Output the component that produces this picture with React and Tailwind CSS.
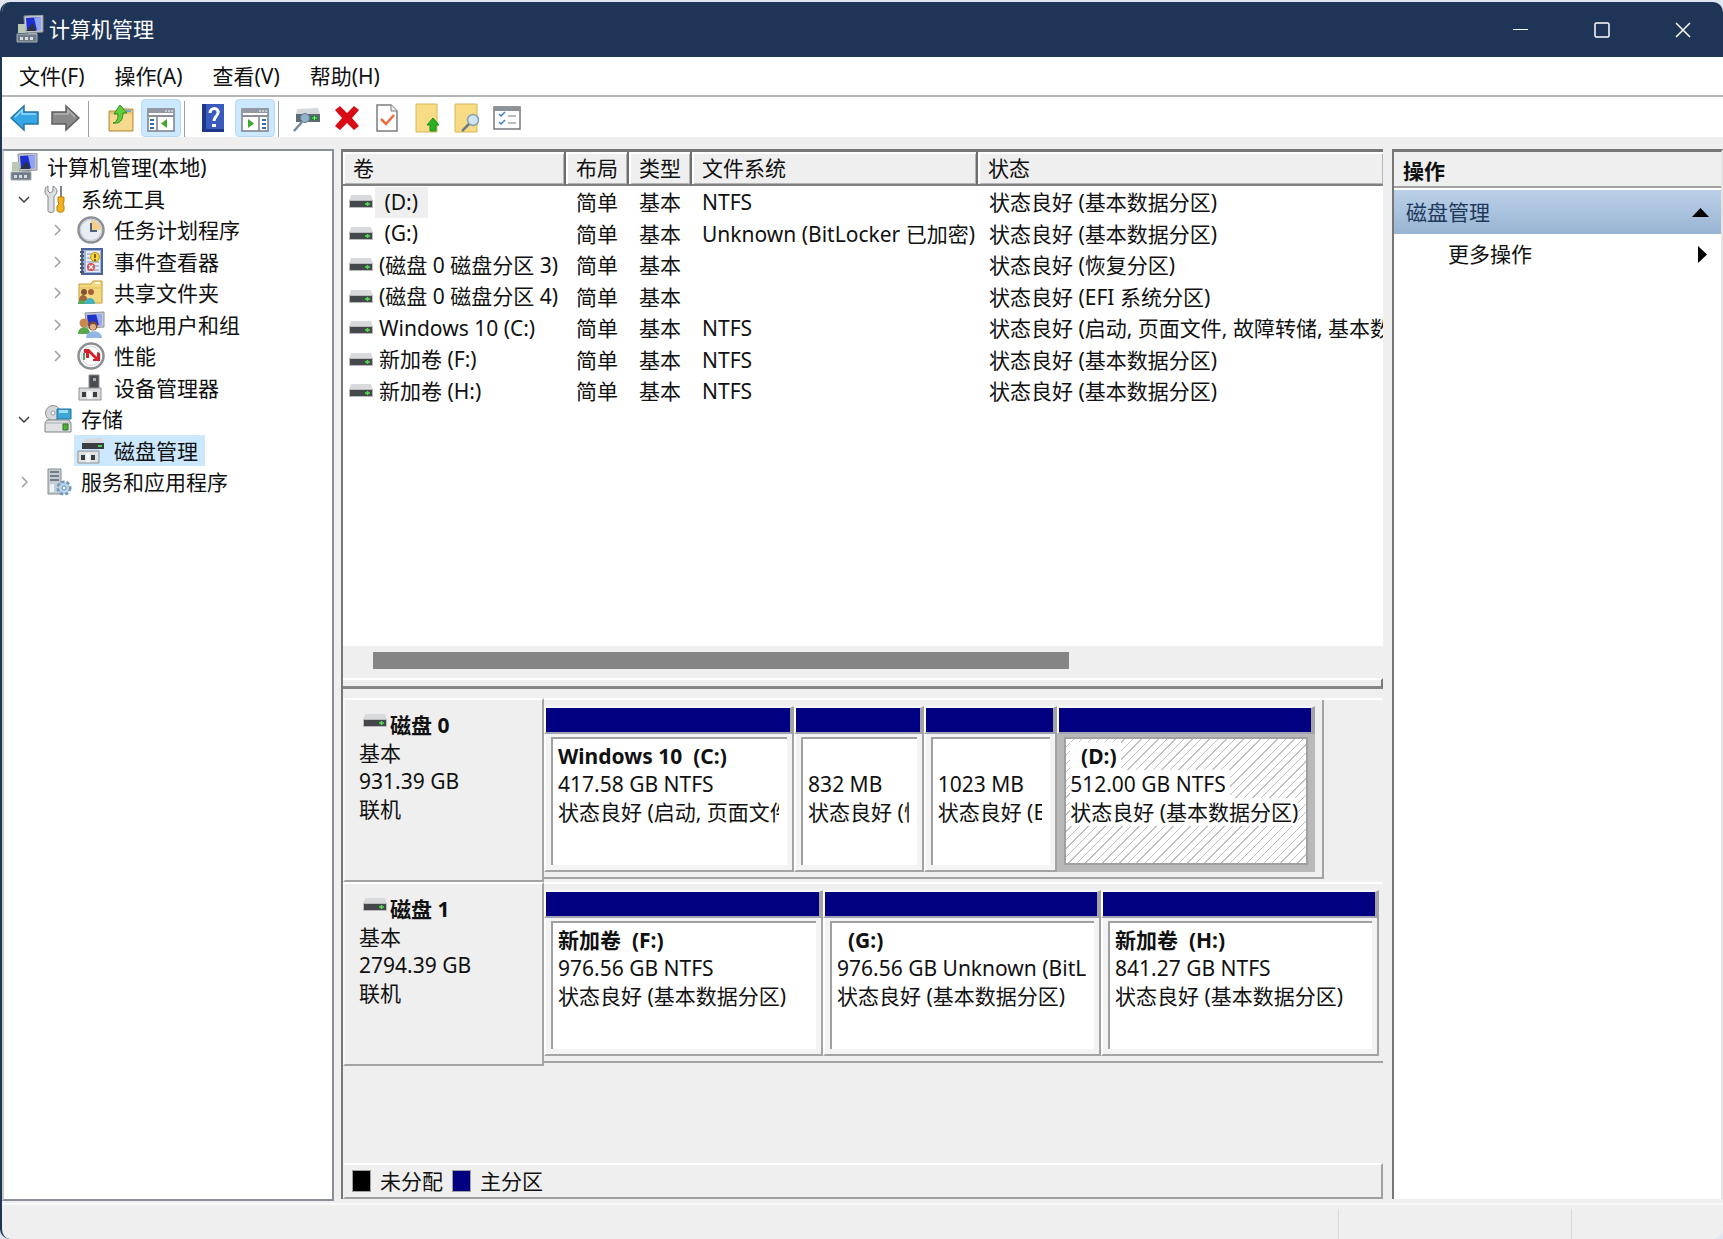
import React, { useState } from 'react';

const ComputerIcon = () => (
  <svg width="28" height="28" viewBox="0 0 28 28">
    <path d="M8 1 27 0v17L9 18z" fill="#c3c7cc" stroke="#8b9096" />
    <path d="M10 3 25 2v13L11 16z" fill="#1d2fd0" />
    <path d="M18 2.5 25 2v13l-4 .3z" fill="#8fa4f4" />
    <path d="M10 16 17 8l3 8z" fill="#2a3140" />
    <path d="M2 9h7v9H2z" fill="#b9c9b4" />
    <path d="M12 18h9v3h-9z" fill="#a4a9ae" />
    <path d="M1 19h20v8H1z" fill="#6f7c88" stroke="#a7adb3" />
    <path d="M4 22h3v3H4zM9 22h3v3H9zM14 22h3v3h-3z" fill="#d5dbe0" />
  </svg>
);

const ToolsIcon = () => (
  <svg width="28" height="28" viewBox="0 0 28 28">
    <path d="M4 1v5l2 2 3-2V1c2 1 4 3 4 5 0 3-2 4-3 5v15c0 2-6 2-6 0V11C2 10 1 9 1 6s1-4 3-5z" fill="#dcdfe1" stroke="#858a8e" />
    <path d="M16 1h2v11h-2z" fill="#7f8387" />
    <path d="M14 12h6v4l-1 3 1 2v4c0 3-7 3-7 0v-4l2-2-1-3z" fill="#f2b21c" stroke="#b97c0a" />
  </svg>
);

const ClockIcon = () => (
  <svg width="28" height="28" viewBox="0 0 28 28">
    <circle cx="14" cy="14" r="12.5" fill="#e6edf4" stroke="#8c8f93" strokeWidth="2.5" />
    <path d="M14 14V4a10 10 0 0 1 10 10z" fill="#f4cf8c" />
    <circle cx="14" cy="14" r="10.5" fill="none" stroke="#c6cbd0" />
    <path d="M14 7v8h6" fill="none" stroke="#4d6178" strokeWidth="2" />
  </svg>
);

const EventIcon = () => (
  <svg width="28" height="28" viewBox="0 0 28 28">
    <path d="M5 1h20v25H5z" fill="#9fb6dc" stroke="#4b6499" strokeWidth="2" />
    <path d="M9 3h14v21H9z" fill="#e9eff9" />
    <path d="M10 6h12M10 10h12M10 14h12M10 18h12M10 22h12" stroke="#7e93bd" />
    <path d="M3 4h4M3 8h4M3 12h4M3 16h4M3 20h4M3 24h4" stroke="#4d566a" strokeWidth="2" />
    <circle cx="18" cy="9" r="4.5" fill="#f6d63a" stroke="#b8960f" />
    <path d="M18 6v4M18 11v2" stroke="#5a4500" strokeWidth="1.5" />
    <circle cx="14" cy="19" r="4" fill="#d94a4a" />
    <path d="m12 17 4 4m0-4-4 4" stroke="#fff" strokeWidth="1.5" />
  </svg>
);

const SharedIcon = () => (
  <svg width="28" height="28" viewBox="0 0 28 28">
    <path d="M2 5h12l2-3h9v22H2z" fill="#f5d97f" stroke="#c69c37" />
    <path d="M18 3h5v2h-5z" fill="#fffbe6" />
    <path d="M2 9h23" stroke="#e3bd58" />
    <circle cx="7" cy="13" r="3" fill="#805135" />
    <circle cx="14" cy="13" r="3" fill="#a85e36" />
    <path d="M2 22c0-8 8-8 9 0z" fill="#a0673f" />
    <path d="M1 25c0-5 8-5 8 0z" fill="#4da95b" />
    <path d="M8 25c0-8 10-8 10 0z" fill="#45b3bd" />
  </svg>
);

const UsersIcon = () => (
  <svg width="28" height="28" viewBox="0 0 28 28">
    <path d="M8 2 27 1v15L10 17z" fill="#c9cdd2" stroke="#8b9096" />
    <path d="m10 4 15-1v11l-14 1z" fill="#1d33cb" />
    <path d="m19 3 6-.3V14l-3 .3z" fill="#97a9f2" />
    <circle cx="7" cy="12" r="4.5" fill="#c88a4c" />
    <path d="M1 23c0-9 12-9 12 0z" fill="#5aa74e" />
    <circle cx="16" cy="15" r="4.5" fill="#8a4b2c" />
    <circle cx="16" cy="16" r="3" fill="#e0b08a" />
    <path d="M9 27c0-9 16-9 16 0z" fill="#92b7e2" />
  </svg>
);

const PerformanceIcon = () => (
  <svg width="28" height="28" viewBox="0 0 28 28">
    <circle cx="14" cy="14" r="12.5" fill="#fff" stroke="#8c8f93" strokeWidth="2.5" />
    <circle cx="14" cy="14" r="9.5" fill="none" stroke="#cfd2d5" />
    <path d="M7 18v-7M21 10v8" stroke="#5f9c6b" strokeWidth="2" />
    <path d="M7 7h5l8 8v-4h3v8h-7v-2h2l-6-6v5H9v-5H7z" fill="#d3212c" />
  </svg>
);

const DeviceIcon = () => (
  <svg width="28" height="28" viewBox="0 0 28 28">
    <path d="M12 1h10v14H12z" fill="#4a4d50" stroke="#8b8e91" />
    <path d="M16 4h3v3h-3z" fill="#a9acaf" />
    <path d="M2 14h22v12H2z" fill="#d9dbdd" stroke="#909396" />
    <path d="M5 18h4v5H5zM16 18h4v5h-4z" fill="#3a3c3e" />
    <path d="M10 17h5v8h-5z" fill="#f4f5f6" />
  </svg>
);

const StorageIcon = () => (
  <svg width="28" height="28" viewBox="0 0 28 28">
    <circle cx="9" cy="8" r="7.5" fill="#d5d8da" stroke="#8f9396" />
    <circle cx="9" cy="8" r="2" fill="#fff" stroke="#999" />
    <path d="M13 4h14v10H13z" fill="#3ba7d8" stroke="#1b6f9b" />
    <path d="M15 5h9v3h-9z" fill="#9fdcf5" />
    <path d="M3 15h22l2 3v9H1v-9z" fill="#dfe1e3" stroke="#7f8386" />
    <path d="M1 18h26" stroke="#a9adb0" />
    <path d="M19 19h5v6h-5z" fill="#4caf38" stroke="#35702b" />
  </svg>
);

const DiskManagementIcon = () => (
  <svg width="28" height="28" viewBox="0 0 28 28">
    <path d="m8 2 17-1 2 5H5z" fill="#d7d9dc" />
    <path d="M5 6h22v6H5z" fill="#3b3e41" />
    <path d="M21 8h4v2h-4z" fill="#4fd04f" />
    <path d="M1 14h21v12H1z" fill="#dfe1e3" stroke="#8d9093" />
    <path d="M4 18h4v5H4zM14 18h4v5h-4z" fill="#3a3c3e" />
    <path d="M9 16h4v9H9z" fill="#f6f7f8" />
  </svg>
);

const ServicesIcon = () => (
  <svg width="28" height="28" viewBox="0 0 28 28">
    <path d="M4 1h13v25H4z" fill="#c4ccd4" stroke="#878e95" />
    <path d="M6 4h9M6 8h9M6 12h9" stroke="#596169" strokeWidth="1.5" />
    <path d="M6 16h4v8H6z" fill="#eef2f5" />
    <circle cx="20" cy="20" r="6" fill="#a9c7e3" stroke="#6f96b8" strokeWidth="3" strokeDasharray="3 2" />
    <circle cx="20" cy="20" r="5" fill="#b9d4ec" />
    <circle cx="20" cy="20" r="2" fill="#fff" stroke="#6288aa" />
  </svg>
);

const DriveIcon = () => (
  <svg className="shrink-0" width="24" height="16" viewBox="0 0 24 16">
    <path d="M2 1h20l2 6H0z" fill="#d9dade" />
    <path d="M0 6h24v8H0z" fill="#b9bbbd" />
    <path d="M1 7h22v6H1z" fill="#45484a" />
    <path d="M16 10h5M18.500 8v4" stroke="#4fe04f" strokeWidth="1.500" />
  </svg>
);

const ArrowIcon = ({ back }) => (
  <svg width="30" height="28" viewBox="0 0 30 28">
    {back ? (
      <path d="M1 14 14 2v6h14v12H14v6z" fill="#35a7e6" stroke="#2576ab" strokeWidth="1.500" />
    ) : (
      <path d="M29 14 16 2v6H2v12h14v6z" fill="#8a8a8a" stroke="#5f5f5f" strokeWidth="1.500" />
    )}
    <path d={back ? 'M5 13 12 6v4h14' : 'M4 10h14V6l7 7'} fill="none" stroke={back ? '#9adcfb' : '#b5b5b5'} strokeWidth="1.500" />
  </svg>
);

const UpFolderIcon = () => (
  <svg width="28" height="28" viewBox="0 0 28 28">
    <path d="M2 7h10l2-2h12v22H2z" fill="#e9c377" stroke="#b98f3d" />
    <path d="M3 10h22v16H3z" fill="#f6d98f" />
    <path d="M19 6h5v2h-5z" fill="#6fa5d8" />
    <path d="M6 19c4-1 5-4 5-9H7l6-9 7 8h-4c0 7-3 11-10 10z" fill="#5fd03c" stroke="#2b8a1b" />
  </svg>
);

// Console window with the tree pane (left) or the action pane (right)
const PaneIcon = ({ right }) => (
  <svg className="mt-1" width="28" height="24" viewBox="0 0 28 24">
    <path d="M1 1h26v22H1z" fill="#fff" stroke="#7b8087" strokeWidth="1.500" />
    <path d="M1 1h26v4H1z" fill="#9398a0" />
    <path d="M18 3h2M21 3h2M24 3h2" stroke="#fff" />
    <path d="M1 8h26" stroke="#8b9098" strokeWidth="2" />
    <path d={right ? 'M18 9v14' : 'M10 9v14'} stroke="#7b8087" strokeWidth="1.500" />
    <path d={right ? 'M21 12h4M21 16h4M21 20h4' : 'M3 12h4M3 16h4M3 20h4'} stroke="#3e6ca8" strokeWidth="2" />
    <path d={right ? 'M7 11v9l6-4.500z' : 'M20 11v9l-6-4.500z'} fill="#3fa72c" />
  </svg>
);

const HelpIcon = () => (
  <svg width="24" height="28" viewBox="0 0 24 28">
    <path d="M1 0h22v28H1z" fill="#3a5bbd" />
    <path d="M1 0h4v28H1zM1 25h22v3H1z" fill="#1f3788" />
    <path d="M9 9c0-6 9-6 8 0-1 4-4 4-4 8" fill="none" stroke="#fff" strokeWidth="3" />
    <path d="M11 20h4v3h-4z" fill="#fff" />
  </svg>
);

const RescanIcon = () => (
  <svg width="28" height="28" viewBox="0 0 28 28">
    <path d="m4 5 21-1 2 6H3z" fill="#d6d9dc" />
    <path d="M3 10h24v8H3z" fill="#5e6b74" />
    <path d="M18 12h7v4h-7z" fill="#1d7f2a" />
    <path d="M19 14h5M21.500 12v4" stroke="#7df07d" />
    <circle cx="12" cy="14" r="4.500" fill="#8fb3cd" stroke="#69808f" />
    <path d="m9 18-8 9" stroke="#76889a" strokeWidth="2.500" />
  </svg>
);

const DeleteIcon = () => (
  <svg width="26" height="26" viewBox="0 0 26 26">
    <path d="m1 5 5-4 7 7 7-7 5 4-7 8 7 8-5 4-7-7-7 7-5-4 7-8z" fill="#d90b14" />
  </svg>
);

const CheckDocIcon = () => (
  <svg width="24" height="28" viewBox="0 0 24 28">
    <path d="M2 1h14l6 6v20H2z" fill="#fff" stroke="#7d7d7d" strokeWidth="1.500" />
    <path d="M16 1v6h6" fill="#eee" stroke="#7d7d7d" />
    <path d="m6 15 5 5 8-9" fill="none" stroke="#ea6a3c" strokeWidth="2.500" />
  </svg>
);

const NoteUpIcon = () => (
  <svg width="24" height="30" viewBox="0 0 24 30">
    <path d="M1 1h21v28H1z" fill="#f8dc85" stroke="#dcb657" />
    <path d="M15 28v-6h-3l6-7 6 7h-3v6z" fill="#27b324" stroke="#1b8a1a" />
  </svg>
);

const NoteSearchIcon = () => (
  <svg width="26" height="30" viewBox="0 0 26 30">
    <path d="M1 1h22v28H1z" fill="#f8dc85" stroke="#dcb657" />
    <circle cx="19" cy="17" r="5.500" fill="#cfe5f5" stroke="#8a9fae" strokeWidth="1.500" />
    <path d="m15 21-7 7" stroke="#6c7c88" strokeWidth="2.500" />
  </svg>
);

const ChecklistIcon = () => (
  <svg width="28" height="24" viewBox="0 0 28 24">
    <path d="M1 1h26v22H1z" fill="#fff" stroke="#75797e" strokeWidth="1.500" />
    <path d="M1 1h26v4H1z" fill="#8d9299" />
    <path d="m6 8 2 2 4-4M6 16l2 2 4-4" fill="none" stroke="#3f7fc4" strokeWidth="1.500" />
    <path d="M15 10h8M15 17h8" stroke="#a2a6ab" strokeWidth="1.500" />
  </svg>
);

const Chevron = ({ open }) => (
  <svg width="14" height="14" viewBox="0 0 14 14" fill="none" strokeWidth="1.500">
    {open ? <path d="m2 5 5 5 5-5" stroke="#404040" /> : <path d="m5 2 5 5-5 5" stroke="#a0a0a0" />}
  </svg>
);

const treeItems = [
  { label: '计算机管理(本地)', level: 0, icon: ComputerIcon },
  { label: '系统工具', level: 1, icon: ToolsIcon, open: true },
  { label: '任务计划程序', level: 2, icon: ClockIcon, open: false },
  { label: '事件查看器', level: 2, icon: EventIcon, open: false },
  { label: '共享文件夹', level: 2, icon: SharedIcon, open: false },
  { label: '本地用户和组', level: 2, icon: UsersIcon, open: false },
  { label: '性能', level: 2, icon: PerformanceIcon, open: false },
  { label: '设备管理器', level: 2, icon: DeviceIcon },
  { label: '存储', level: 1, icon: StorageIcon, open: true },
  { label: '磁盘管理', level: 2, icon: DiskManagementIcon },
  { label: '服务和应用程序', level: 1, icon: ServicesIcon, open: false },
];

const levelPadding = ['pl-[6px]', 'pl-[13px]', 'pl-[46px]'];

const volumes = [
  { name: ' (D:)', fs: 'NTFS', status: '状态良好 (基本数据分区)' },
  { name: ' (G:)', fs: 'Unknown (BitLocker 已加密)', status: '状态良好 (基本数据分区)' },
  { name: '(磁盘 0 磁盘分区 3)', fs: '', status: '状态良好 (恢复分区)' },
  { name: '(磁盘 0 磁盘分区 4)', fs: '', status: '状态良好 (EFI 系统分区)' },
  { name: 'Windows 10 (C:)', fs: 'NTFS', status: '状态良好 (启动, 页面文件, 故障转储, 基本数据分区)' },
  { name: '新加卷 (F:)', fs: 'NTFS', status: '状态良好 (基本数据分区)' },
  { name: '新加卷 (H:)', fs: 'NTFS', status: '状态良好 (基本数据分区)' },
];

const disks = [
  {
    name: '磁盘 0',
    size: '931.39 GB',
    full: false,
    partitions: [
      { name: 'Windows 10  (C:)', size: '417.58 GB NTFS', status: '状态良好 (启动, 页面文件, 故障转储)', share: 251 },
      { name: '', size: '832 MB', status: '状态良好 (恢复分区)', share: 130 },
      { name: '', size: '1023 MB', status: '状态良好 (EFI 系统分区)', share: 134 },
      { name: '  (D:)', size: '512.00 GB NTFS', status: '状态良好 (基本数据分区)', share: 259, selected: true },
    ],
  },
  {
    name: '磁盘 1',
    size: '2794.39 GB',
    full: true,
    partitions: [
      { name: '新加卷  (F:)', size: '976.56 GB NTFS', status: '状态良好 (基本数据分区)', share: 279 },
      { name: '  (G:)', size: '976.56 GB Unknown (BitLocker 已加密)', status: '状态良好 (基本数据分区)', share: 278 },
      { name: '新加卷  (H:)', size: '841.27 GB NTFS', status: '状态良好 (基本数据分区)', share: 278 },
    ],
  },
];

const TitleBar = () => (
  <header className="flex h-[55px] shrink-0 items-center bg-[#1f3557] text-white">
    <div className="flex flex-1 items-center gap-[5px] pb-[2px] pl-[14px]">
      <ComputerIcon />
      <h1 className="text-[21px]">计算机管理</h1>
    </div>
    <button aria-label="最小化" className="flex h-full w-[81px] items-center justify-center">
      <svg width="16" height="16" viewBox="0 0 16 16"><path d="M0 7.500h15" stroke="#fff" /></svg>
    </button>
    <button aria-label="最大化" className="flex h-full w-[81px] items-center justify-center">
      <svg width="16" height="16" viewBox="0 0 16 16"><rect x="1" y="1" width="14" height="14" rx="1.500" fill="none" stroke="#fff" strokeWidth="1.500" /></svg>
    </button>
    <button aria-label="关闭" className="flex h-full w-[81px] items-center justify-center">
      <svg width="16" height="16" viewBox="0 0 16 16"><path d="m1 1 14 14m0-14L1 15" stroke="#fff" strokeWidth="1.500" /></svg>
    </button>
  </header>
);

const ToolButton = ({ label, active, children }) => (
  <button
    aria-label={label}
    className={`flex h-[38px] w-10 items-center justify-center rounded-sm border ${active ? 'border-[#b5dbf7] bg-[#cce8ff]' : 'border-transparent'}`}
  >
    {children}
  </button>
);

const Separator = () => <div className="mr-2 ml-[3px] h-9 w-px bg-[#a0a0a0]" />;

const Toolbar = () => (
  <div className="flex h-10 shrink-0 items-end bg-white pl-[3px]">
    <ToolButton label="后退"><ArrowIcon back /></ToolButton>
    <ToolButton label="前进"><ArrowIcon /></ToolButton>
    <Separator />
    <div className="w-1" />
    <ToolButton label="上移"><UpFolderIcon /></ToolButton>
    <ToolButton label="显示/隐藏控制台树" active><PaneIcon /></ToolButton>
    <Separator />
    <ToolButton label="帮助"><HelpIcon /></ToolButton>
    <div className="w-[2px]" />
    <ToolButton label="显示/隐藏操作窗格" active><PaneIcon right /></ToolButton>
    <Separator />
    <ToolButton label="重新扫描磁盘"><RescanIcon /></ToolButton>
    <ToolButton label="删除"><DeleteIcon /></ToolButton>
    <ToolButton label="属性"><CheckDocIcon /></ToolButton>
    <ToolButton label="打开"><NoteUpIcon /></ToolButton>
    <ToolButton label="查找"><NoteSearchIcon /></ToolButton>
    <ToolButton label="设置"><ChecklistIcon /></ToolButton>
  </div>
);

const TreePane = () => {
  const [selected, setSelected] = useState('磁盘管理');

  return (
    <nav className="w-[332px] shrink-0 border-2 border-[#8a8e96] border-l-[#c8c8c8] bg-white">
      <ul>
        {treeItems.map((item) => {
          const Icon = item.icon;
          return (
            <li key={item.label} className={`flex items-center odd:h-8 even:h-[31px] ${levelPadding[item.level]}`}>
              {item.level > 0 && <span className="w-6">{item.open !== undefined && <Chevron open={item.open} />}</span>}
              <button
                onClick={() => setSelected(item.label)}
                className={`flex h-full items-center gap-[9px] whitespace-nowrap pr-[7px] ${item.level > 0 ? 'pl-[3px]' : ''} ${selected === item.label ? 'bg-[#cce8ff]' : ''}`}
              >
                <Icon />
                {item.label}
              </button>
            </li>
          );
        })}
      </ul>
    </nav>
  );
};

const headCell = 'overflow-hidden border-r-2 border-b-2 border-r-[#6e6e6e] border-b-[#808080] bg-[#efefef] pl-[10px] text-left font-normal shadow-[inset_2px_2px_0_#fff,inset_-1px_-1px_0_#b4b4b4] last:border-r-0';

const VolumeTable = () => (
  <table className="w-full table-fixed border-separate border-spacing-0 whitespace-nowrap">
    <thead>
      <tr className="h-[34px]">
        <th className={`w-[223px] ${headCell}`}>卷</th>
        <th className={`w-[63px] ${headCell}`}>布局</th>
        <th className={`w-[63px] ${headCell}`}>类型</th>
        <th className={`w-[286px] ${headCell}`}>文件系统</th>
        <th className={headCell}>状态</th>
      </tr>
    </thead>
    <tbody>
      {volumes.map((volume, index) => (
        <tr key={volume.name} className="odd:h-8 even:h-[31px]">
          <td className="p-0 pl-[6px]">
            <div className="flex items-center gap-[2px]">
              <DriveIcon />
              <span className={`whitespace-pre px-1 leading-[31px] ${index === 0 ? 'bg-[#efefef] pr-[10px]' : ''}`}>{volume.name}</span>
            </div>
          </td>
          <td className="p-0 pl-[10px]">简单</td>
          <td className="p-0 pl-[10px]">基本</td>
          <td className="p-0 pl-[10px]">{volume.fs}</td>
          <td className="overflow-hidden p-0 pl-[11px]">{volume.status}</td>
        </tr>
      ))}
    </tbody>
  </table>
);

const Partition = ({ partition }) => {
  const line = partition.selected ? 'bg-white pr-1' : '';
  return (
    <div className="flex min-w-0 basis-0 flex-col" style={{ flexGrow: partition.share }}>
      <div className="h-7 border-2 border-t-[#f6f6f6] border-r-4 border-r-[#a3a3a3] border-b-[#a3a3b4] border-l-white bg-[#000080]" />
      <div
        className={`h-[138px] border-2 border-t-0 pt-[3px] pr-[5px] pb-[5px] pl-[5px] ${partition.selected ? 'border-[#b9b9b9] bg-[#b9b9b9]' : 'border-r-[#a3a3a3] border-b-[#a3a3a3] border-l-white bg-[#f3f3f3]'}`}
      >
        <div
          className={`flex h-full flex-col items-start overflow-hidden whitespace-pre border-t-2 border-l-2 border-[#a0a0a0] pt-[3px] pr-2 leading-7 ${partition.selected ? 'border-r-2 border-b-2 pr-0 pl-1 bg-[repeating-linear-gradient(135deg,#fff_0px,#fff_5px,#c0c0c0_5px,#c0c0c0_6px)]' : 'bg-white pl-[5px]'}`}
        >
          <strong className={`h-7 ${line}`}>{partition.name}</strong>
          <span className={`max-w-full overflow-hidden ${line}`}>{partition.size}</span>
          <span className={`max-w-full overflow-hidden ${line}`}>{partition.status}</span>
        </div>
      </div>
    </div>
  );
};

const DiskRow = ({ disk }) => (
  <section className="flex h-[184px]">
    <div className="w-[201px] shrink-0 border-2 border-t-white border-r-[#a3a3a3] border-b-[#a3a3a3] border-l-[#f8f8f8] pt-[11px] pl-[14px] leading-7">
      <div className="flex items-center">
        <span className="pb-2 pl-1"><DriveIcon /></span>
        <strong className="pl-[3px]">{disk.name}</strong>
      </div>
      <p>基本</p>
      <p>{disk.size}</p>
      <p>联机</p>
    </div>
    <div className="min-w-0 flex-1 border-t-2 border-white">
      <div className={`flex h-[179px] border-b-2 border-[#a3a3a3] pt-[6px] ${disk.full ? 'pr-1' : 'w-[93%] border-r-2 pr-[7px]'}`}>
        {disk.partitions.map((partition) => (
          <Partition key={partition.status + partition.size} partition={partition} />
        ))}
      </div>
    </div>
  </section>
);

const DiskPane = () => (
  <main className="mb-[2px] flex min-w-0 flex-1 flex-col border-t-[3px] border-l-2 border-[#777] bg-[#efefef]">
    <div className="flex min-h-0 shrink grow-[537] basis-0 flex-col">
      <div className="min-h-0 flex-1 overflow-hidden bg-white">
        <VolumeTable />
      </div>
      <div className="h-8 px-[30px] pt-[6px]">
        <div className="h-[17px] w-[71%] bg-[#858585]" />
      </div>
      <div className="h-[11px] border-t-2 border-r-2 border-b-[3px] border-t-white border-r-[#777] border-b-[#858585]" />
    </div>
    <div className="flex min-h-0 shrink grow-[510] basis-0 flex-col">
      <div className="min-h-0 flex-1 overflow-hidden pt-[9px]">
        {disks.map((disk) => (
          <DiskRow key={disk.name} disk={disk} />
        ))}
      </div>
      <div className="flex h-[36px] items-center border-2 border-t-white border-r-[#a0a0a0] border-b-[#a0a0a0] border-l-[#efefef] pl-[7px]">
        <span className="h-[22px] w-[19px] border border-[#a0a0a0] bg-black" />
        <span className="pl-[9px]">未分配</span>
        <span className="ml-[9px] h-[22px] w-[19px] border border-[#a0a0a0] bg-[#000080]" />
        <span className="pl-[9px]">主分区</span>
      </div>
    </div>
  </main>
);

const ActionPane = () => (
  <aside className="mb-[2px] w-[331px] shrink-0 border-t-[3px] border-r-2 border-l-2 border-[#777] border-r-[#e3e3e3] bg-white">
    <h2 className="flex h-9 items-center border-b-2 border-[#a0a0a0] bg-[#efefef] pt-1 pl-[9px] font-bold">操作</h2>
    <button className="mt-[2px] flex h-11 w-full items-center justify-between bg-linear-to-b from-[#bcd1e9] to-[#98b4d2] pr-3 pl-3 text-[#1e395b]">
      磁盘管理
      <svg width="17" height="9" viewBox="0 0 17 9"><path d="M0 9 8.500 0 17 9z" fill="#000" /></svg>
    </button>
    <button className="flex h-10 w-full items-center justify-between pr-[14px] pl-[54px]">
      更多操作
      <svg width="9" height="17" viewBox="0 0 9 17"><path d="m0 0 9 8.500L0 17z" fill="#000" /></svg>
    </button>
  </aside>
);

export default function App() {
  return (
    <div className="h-screen bg-[#dfe6f0] pt-[2px] font-['Noto_Sans','Noto_Sans_CJK_SC',sans-serif] text-[21px] leading-7 text-[#111]">
      <div className="flex h-full flex-col overflow-hidden rounded-[10px] border-l-2 border-[#1f3557] bg-[#efefef]">
        <TitleBar />
        <nav className="flex h-10 shrink-0 items-center gap-[30px] border-b-2 border-[#b5b5b5] bg-white pl-[17px]">
          <button>文件(F)</button>
          <button>操作(A)</button>
          <button>查看(V)</button>
          <button>帮助(H)</button>
        </nav>
        <Toolbar />
        <div className="flex min-h-0 flex-1 pt-3">
          <TreePane />
          <div className="w-[7px] shrink-0" />
          <DiskPane />
          <div className="w-[9px] shrink-0" />
          <ActionPane />
        </div>
        <footer className="mt-[2px] flex h-9 shrink-0 border-t-2 border-[#fafafa] pt-1">
          <div className="flex-1 border-r border-[#d9d9d9]" />
          <div className="w-[233px] border-r border-[#d9d9d9]" />
          <div className="w-[151px]" />
        </footer>
      </div>
    </div>
  );
}
